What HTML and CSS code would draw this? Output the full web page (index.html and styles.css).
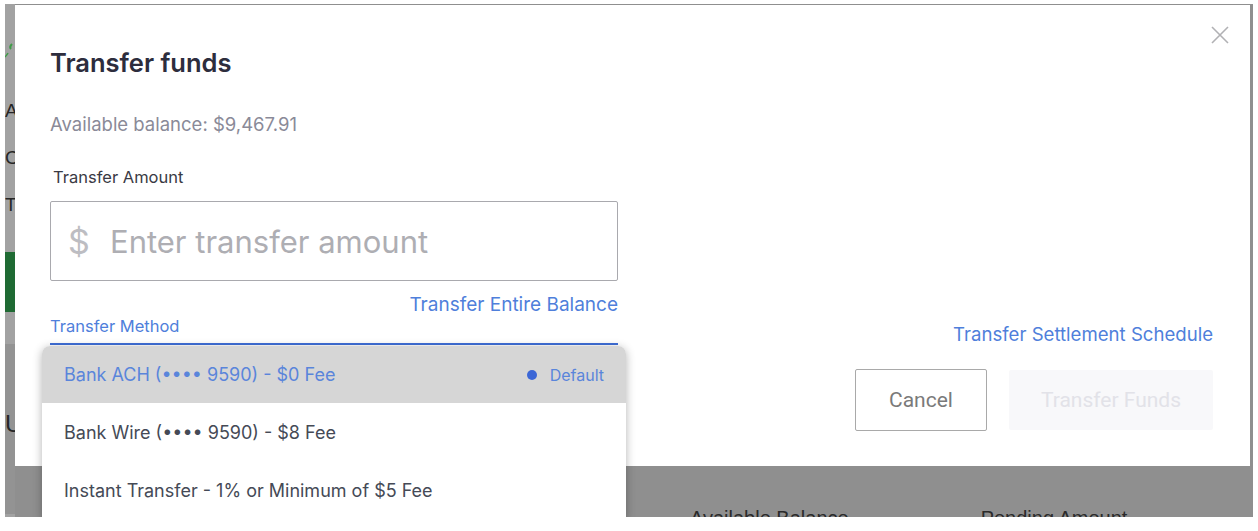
FILE: index.html
```html
<!DOCTYPE html>
<html lang="en">
<head>
    <meta charset="UTF-8">
    <meta name="viewport" content="width=device-width, initial-scale=1.0">
    <title>Transfer funds</title>
    <link rel="stylesheet" href="styles.css">
</head>
<body>

    <div class="screen">
        <!-- page behind the modal, only its edges show -->
        <div class="page-edge">
            <svg class="leaf" width="10" height="20" viewBox="0 0 10 20">
                <path d="M7 2 C5 4 5 6 6 7" stroke="#3f9c48" stroke-width="2" fill="none"/>
                <path d="M3 11 C2 13 1 14 0 15" stroke="#3f9c48" stroke-width="1.5" fill="none"/>
            </svg>
            <span class="edge-text">Account</span>
            <span class="edge-text">Cash</span>
            <span class="edge-text">Transfers</span>
            <span class="edge-green"></span>
            <span class="edge-gap"></span>
            <span class="edge-big">Upcoming</span>
        </div>

        <div class="main-col">
            <div class="modal">
                <button class="close" aria-label="Close">
                    <svg width="18" height="18" viewBox="0 0 18 18">
                        <path d="M1 1 L17 17 M17 1 L1 17" stroke="#b1b1b4" stroke-width="1.6" fill="none"/>
                    </svg>
                </button>

                <div class="form-col">
                    <h1>Transfer funds</h1>
                    <p class="balance">Available balance: $9,467.91</p>

                    <label class="field-label" for="amount">Transfer Amount</label>
                    <div class="amount-box">
                        <span class="currency">$</span>
                        <input type="text" id="amount" placeholder="Enter transfer amount">
                    </div>
                    <a href="#" class="link entire">Transfer Entire Balance</a>

                    <div class="select">
                        <span class="select-label">Transfer Method</span>
                        <ul class="menu">
                            <li class="active">
                                <span>Bank ACH (&bull;&bull;&bull;&bull; 9590) - $0 Fee</span>
                                <span class="default"><i class="dot"></i>Default</span>
                            </li>
                            <li>Bank Wire (&bull;&bull;&bull;&bull; 9590) - $8 Fee</li>
                            <li>Instant Transfer - 1% or Minimum of $5 Fee</li>
                        </ul>
                    </div>
                </div>

                <div class="side-col">
                    <a href="#" class="link schedule">Transfer Settlement Schedule</a>
                    <div class="actions">
                        <button class="btn cancel">Cancel</button>
                        <button class="btn submit" disabled>Transfer Funds</button>
                    </div>
                </div>
            </div>

            <div class="page-bottom">
                <span>Available Balance</span>
                <span>Pending Amount</span>
            </div>
        </div>
    </div>

</body>
</html>
```

FILE: styles.css
```css
* {
  margin: 0;
  padding: 0;
  box-sizing: border-box;
}

body {
  background: #fff;
  padding: 4px 5px 0 5px;
  font-family: "Inter", "Noto Sans", sans-serif;
}

.screen {
  display: flex;
  height: 513px;
  background: #8f8f8f;
  overflow: hidden;
}

/* left sliver of the page */
.page-edge {
  width: 10px;
  flex: none;
  display: flex;
  flex-direction: column;
  overflow: hidden;
  background: #a2a2a2;
  color: #262626;
  font-family: "Liberation Sans", sans-serif;
  font-size: 19px;
  white-space: nowrap;
}

.leaf {
  flex: none;
  margin: 38px 0 38px 0;
}

.edge-text {
  flex: none;
  height: 47px;
  line-height: 22px;
}

.edge-green {
  flex: none;
  height: 60px;
  margin-top: 11px;
  background: #1f6a33;
}

.edge-gap {
  flex: none;
  height: 32px;
}

.edge-big {
  flex: none;
  padding-top: 66px;
  height: 170px;
  background: #939393;
  font-size: 24px;
}

.main-col {
  flex: 1;
  display: flex;
  flex-direction: column;
}

.modal {
  position: relative;
  flex: none;
  height: 461px;
  margin: 1px 3px 0 0;
  background: #fff;
  display: flex;
  justify-content: space-between;
  padding: 41px 37px 35px 35px;
}

.close {
  position: absolute;
  top: 21px;
  right: 21px;
  width: 18px;
  height: 18px;
  border: none;
  background: none;
  cursor: pointer;
}

.form-col {
  width: 568px;
  display: flex;
  flex-direction: column;
}

h1 {
  font-size: 25.5px;
  font-weight: 600;
  color: #2d2d3d;
  line-height: 34px;
}

.balance {
  margin-top: 32px;
  font-size: 18.5px;
  color: #8a8a98;
  line-height: 24px;
}

.field-label {
  margin: 31px 0 0 3px;
  font-size: 16.5px;
  color: #3a3a44;
  line-height: 20px;
}

.amount-box {
  margin-top: 14px;
  height: 80px;
  border: 1.5px solid #a9a9ae;
  border-radius: 2px;
  display: flex;
  align-items: center;
  padding-left: 17px;
}

.currency {
  font-size: 34px;
  color: #bdbdc2;
  width: 42px;
}

.amount-box input {
  border: none;
  outline: none;
  flex: 1;
  font-family: inherit;
  font-size: 31px;
  color: #333;
  background: transparent;
}

.amount-box input::placeholder {
  color: #aeaeb3;
}

.link {
  color: #4f7fdb;
  text-decoration: none;
  font-size: 19px;
  line-height: 24px;
}

.schedule {
  font-size: 18.6px;
}

.entire {
  align-self: flex-end;
  margin-top: 12px;
}

.select {
  position: relative;
  border-bottom: 2px solid #3f6fd8;
  padding-bottom: 7px;
  margin-top: -1px;
}

.select-label {
  font-size: 16.5px;
  color: #4f7fdb;
  line-height: 20px;
}

/* open dropdown sits over the modal */
.menu {
  position: absolute;
  top: 30px;
  left: -8px;
  right: -8px;
  list-style: none;
  background: #fff;
  border-radius: 8px 8px 0 0;
  box-shadow: 0 2px 10px rgba(0, 0, 0, 0.3);
  overflow: hidden;
}

.menu li {
  height: 58px;
  display: flex;
  align-items: center;
  justify-content: space-between;
  padding: 0 22px;
  font-size: 18px;
  color: #454a56;
}

.menu li.active {
  background: #d6d6d6;
  color: #5a85db;
  height: 57px;
}

.default {
  display: flex;
  align-items: center;
  font-size: 16px;
}

.dot {
  width: 10px;
  height: 10px;
  border-radius: 50%;
  background: #3c67d6;
  margin-right: 13px;
}

.side-col {
  display: flex;
  flex-direction: column;
  align-items: flex-end;
  justify-content: flex-end;
}

.actions {
  display: flex;
  align-items: center;
  gap: 22px;
  margin-top: 23px;
}

.btn {
  font-family: "Roboto", sans-serif;
  font-size: 21px;
  height: 62px;
  border-radius: 2px;
}

.cancel {
  width: 132px;
  background: #fff;
  border: 1.5px solid #a9a9a9;
  color: #7a7a7a;
}

.submit {
  width: 204px;
  height: 60px;
  background: #f8f8fa;
  border: none;
  color: #e2e2e8;
}

.page-bottom {
  display: flex;
  gap: 132px;
  padding: 41px 0 0 675px;
  font-family: "Liberation Sans", sans-serif;
  font-size: 20px;
  color: #2a2a2a;
  white-space: nowrap;
}
```
